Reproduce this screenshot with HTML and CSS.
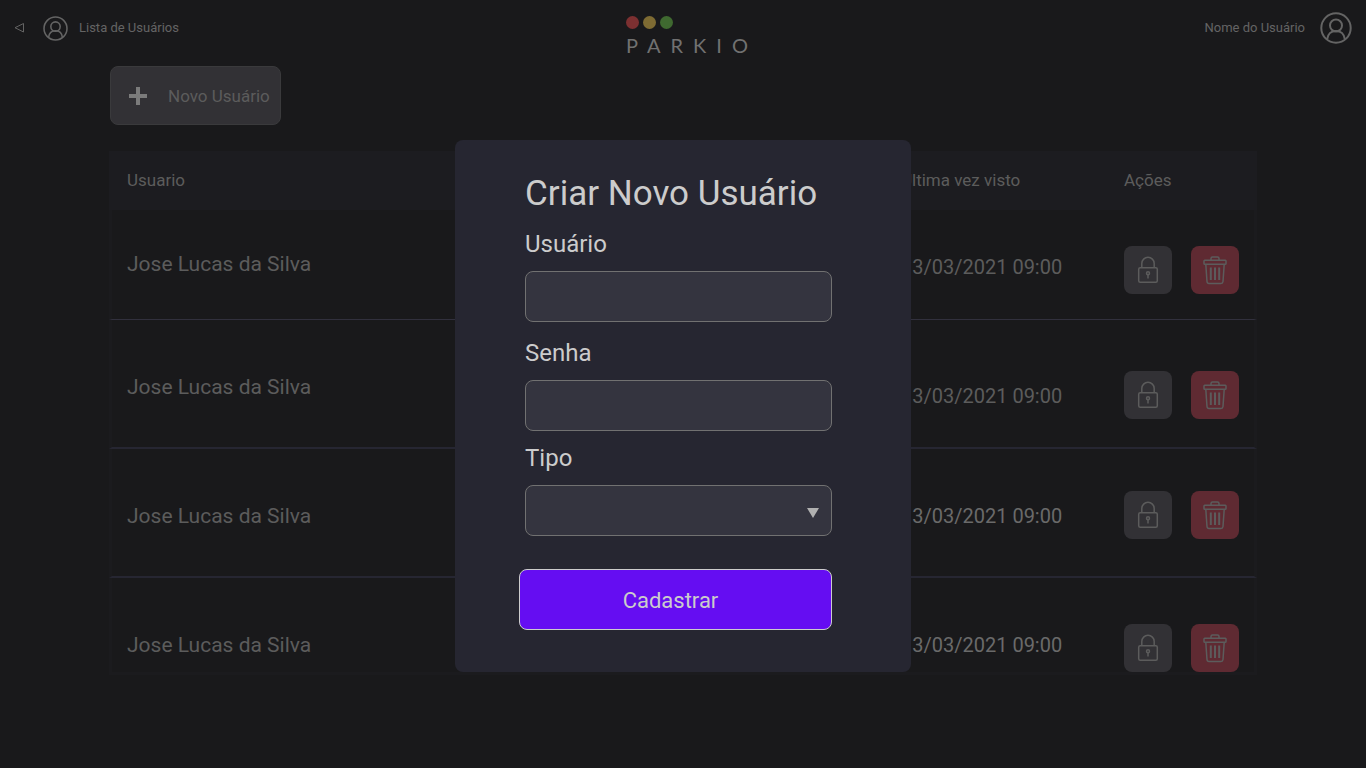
FILE: index.html
```html
<!DOCTYPE html>
<html lang="pt-BR">
<head>
<meta charset="utf-8">
<title>Parkio - Lista de Usuários</title>
<link rel="stylesheet" href="styles.css">
</head>
<body>
<svg class="sprite" aria-hidden="true">
  <symbol id="person" viewBox="0 0 32 32">
    <g fill="none" stroke="currentColor" stroke-width="2">
      <circle cx="16" cy="16" r="14.7"/>
      <circle cx="16" cy="13.5" r="6"/>
      <path d="M7.2 27.2c.6-5.200 4.200-8.300 8.800-8.300s8.200 3.100 8.800 8.300"/>
    </g>
  </symbol>
  <symbol id="lock" viewBox="0 0 24 30">
    <g fill="none" stroke="currentColor" stroke-width="1.500">
      <rect x="2.700" y="12.700" width="18.600" height="14.600" rx="1.500"/>
      <path d="M5.800 12.700V8.500a6.200 6.200 0 0 1 12.400 0v4.200"/>
      <circle cx="12" cy="18.300" r="1.500"/>
      <path d="M12 19.500v4"/>
    </g>
  </symbol>
  <symbol id="trash" viewBox="0 0 26 30">
    <g fill="none" stroke="currentColor" stroke-width="1.500" stroke-linejoin="round">
      <path d="M9 5V3.500C9 2.500 9.500 2 10.500 2h5c1 0 1.500.5 1.500 1.500V5"/>
      <rect x="2" y="5.200" width="22" height="4" rx=".8"/>
      <path d="M3.800 9.200l1.200 17.300c.1 1.200.8 1.900 2 1.900h12c1.200 0 1.900-.7 2-1.900l1.200-17.300"/>
      <path d="M8.800 12.500v12.500M13 12.500v12.500M17.200 12.500v12.500" stroke-width="2"/>
    </g>
  </symbol>
</svg>

<header class="topbar">
  <nav class="topbar-side">
    <a class="back" href="#" aria-label="Voltar">
      <svg width="10" height="10" viewBox="0 0 10 10"><path d="M9.500 .5v8.500L1 4.700z" fill="none" stroke="currentColor"/></svg>
    </a>
    <svg class="avatar-small"><use href="#person"/></svg>
    <span>Lista de Usuários</span>
  </nav>
  <div class="logo">
    <div class="dots"><i class="dot red"></i><i class="dot yellow"></i><i class="dot green"></i></div>
    <span class="wordmark">PARKIO</span>
  </div>
  <div class="topbar-side account">
    <span>Nome do Usuário</span>
    <svg class="avatar"><use href="#person"/></svg>
  </div>
</header>

<main class="content">
  <button class="new-user" type="button">
    <svg width="18" height="18" viewBox="0 0 18 18"><path d="M7 0h4v7h7v4h-7v7H7v-7H0V7h7z" fill="currentColor"/></svg>
    <span>Novo Usuário</span>
  </button>

  <table class="users">
    <colgroup><col class="col-user"><col class="col-seen"><col class="col-actions"></colgroup>
    <thead>
      <tr><th>Usuario</th><th>Última vez visto</th><th>Ações</th></tr>
    </thead>
    <tbody>
      <tr class="row-first">
        <td class="name">Jose Lucas da Silva</td>
        <td class="seen">13/03/2021 09:00</td>
        <td class="actions"><div class="action-group">
          <button class="action" type="button" aria-label="Bloquear"><svg class="icon-lock"><use href="#lock"/></svg></button>
          <button class="action danger" type="button" aria-label="Excluir"><svg class="icon-trash"><use href="#trash"/></svg></button>
        </div></td>
      </tr>
      <tr class="row-low">
        <td class="name">Jose Lucas da Silva</td>
        <td class="seen">13/03/2021 09:00</td>
        <td class="actions"><div class="action-group">
          <button class="action" type="button" aria-label="Bloquear"><svg class="icon-lock"><use href="#lock"/></svg></button>
          <button class="action danger" type="button" aria-label="Excluir"><svg class="icon-trash"><use href="#trash"/></svg></button>
        </div></td>
      </tr>
      <tr>
        <td class="name">Jose Lucas da Silva</td>
        <td class="seen recent">13/03/2021 09:00</td>
        <td class="actions"><div class="action-group">
          <button class="action" type="button" aria-label="Bloquear"><svg class="icon-lock"><use href="#lock"/></svg></button>
          <button class="action danger" type="button" aria-label="Excluir"><svg class="icon-trash"><use href="#trash"/></svg></button>
        </div></td>
      </tr>
      <tr class="row-last">
        <td class="name">Jose Lucas da Silva</td>
        <td class="seen recent">13/03/2021 09:00</td>
        <td class="actions"><div class="action-group">
          <button class="action" type="button" aria-label="Bloquear"><svg class="icon-lock"><use href="#lock"/></svg></button>
          <button class="action danger" type="button" aria-label="Excluir"><svg class="icon-trash"><use href="#trash"/></svg></button>
        </div></td>
      </tr>
    </tbody>
  </table>
</main>

<div class="overlay">
  <form class="modal" role="dialog" aria-labelledby="modal-title">
    <h1 id="modal-title">Criar Novo Usuário</h1>
    <div class="field">
      <label for="user">Usuário</label>
      <input id="user" type="text">
    </div>
    <div class="field field-tight">
      <label for="password">Senha</label>
      <input id="password" type="password">
    </div>
    <div class="field field-last">
      <label for="type">Tipo</label>
      <div class="select-wrap">
        <select id="type"><option value=""></option></select>
        <svg class="caret" width="12" height="10" viewBox="0 0 12 10"><path d="M0 0h12L6 10z" fill="currentColor"/></svg>
      </div>
    </div>
    <button class="submit" type="submit">Cadastrar</button>
  </form>
</div>
</body>
</html>
```
FILE: styles.css
```css
* {
  box-sizing: border-box;
}

body {
  margin: 0;
  min-height: 100vh;
  background: #19191b;
  color: #5c5c5c;
  font-family: Roboto, "Liberation Sans", sans-serif;
}

button,
input,
select {
  font: inherit;
  color: inherit;
}

.sprite {
  display: none;
}

/* Top bar */
.topbar {
  display: grid;
  grid-template-columns: 1fr auto 1fr;
  align-items: center;
  height: 56px;
  padding: 0 14px;
  color: #646464;
  font-size: 13px;
  line-height: 16px;
}

.topbar-side {
  display: flex;
  align-items: center;
}

.account {
  justify-content: flex-end;
  gap: 15px;
}

.back {
  display: flex;
  margin-right: 19px;
  color: inherit;
}

.avatar-small {
  width: 25px;
  height: 25px;
  margin-right: 11px;
}

.avatar {
  width: 32px;
  height: 32px;
}

.logo {
  padding: 16px 0 0 18px;
  color: #717171;
}

.dots {
  display: flex;
  gap: 4px;
}

.dot {
  width: 13px;
  height: 13px;
  border-radius: 50%;
}

.red {
  background: #7c3031;
}

.yellow {
  background: #7e6b33;
}

.green {
  background: #3f6930;
}

.wordmark {
  display: block;
  margin-top: 5px;
  font-family: Lato, sans-serif;
  font-size: 20px;
  line-height: 22px;
  letter-spacing: 10px;
}

/* Page content */
.content {
  padding: 10px 109px 0;
}

.new-user {
  display: flex;
  align-items: center;
  gap: 21px;
  height: 59px;
  margin: 0 0 26px 1px;
  padding: 0 10px 0 18px;
  border: 1px solid #3a3a3c;
  border-radius: 8px;
  background: #323135;
  font-size: 17px;
}

.new-user svg {
  color: #7b7b7b;
}

.users {
  width: 100%;
  table-layout: fixed;
  border-collapse: separate;
  border-spacing: 0;
  text-align: left;
}

.col-seen {
  width: 223px;
}

.col-actions {
  width: 133px;
}

.users th {
  height: 59px;
  padding: 0 0 2px;
  background: #1c1c20;
  font-size: 17px;
  font-weight: 400;
}

.users th:first-child {
  padding-left: 18px;
}

.users td {
  height: 129px;
  padding: 55px 0 0;
  border-bottom: 2px solid #262632;
  font-size: 20px;
  line-height: 24px;
  vertical-align: top;
}

.users td:first-child {
  padding-left: 15px;
  border-left: 3px solid #1b1b1e;
}

.users td:last-child {
  border-right: 3px solid #1b1b1e;
}

.users td.name {
  font-size: 21px;
}

.users td.recent {
  color: #6a6a6a;
}

.users td.actions {
  padding-top: 42px;
}

.users .row-first td {
  height: 110px;
  padding-top: 42px;
  border-bottom: 1px solid #31303d;
}

.users .row-first td.seen {
  padding-top: 45px;
}

.users .row-first td.actions {
  padding-top: 36px;
}

.users .row-low td.seen {
  padding-top: 64px;
}

.users .row-low td.actions {
  padding-top: 51px;
}

.users .row-last td {
  height: 97px;
  border-bottom: 3px solid #1b1b1e;
}

.users .row-last td.actions {
  padding-top: 46px;
}

.action-group {
  display: flex;
  gap: 19px;
}

.action {
  display: flex;
  align-items: center;
  justify-content: center;
  width: 48px;
  height: 48px;
  padding: 0;
  border: 0;
  border-radius: 8px;
  background: #323135;
}

.danger {
  background: #5f2a32;
}

.icon-lock {
  width: 24px;
  height: 30px;
}

.icon-trash {
  width: 26px;
  height: 30px;
}

/* New user dialog */
.overlay {
  position: fixed;
  inset: 0;
  display: flex;
  align-items: center;
  justify-content: center;
  padding-top: 44px;
}

.modal {
  width: 456px;
  padding: 33px 79px 42px 70px;
  border-radius: 8px;
  background: #262631;
  color: #cccccc;
}

.modal h1 {
  margin: 0 0 13px;
  font-size: 35px;
  font-weight: 400;
  line-height: 42px;
}

.field {
  display: flex;
  flex-direction: column;
  gap: 11px;
  margin-bottom: 15px;
}

.field-tight {
  margin-bottom: 11px;
}

.field-last {
  margin-bottom: 33px;
}

.field label {
  font-size: 24px;
  line-height: 32px;
}

.field input,
.field select {
  display: block;
  width: 100%;
  height: 51px;
  padding: 0 12px;
  border: 1px solid #717171;
  border-radius: 8px;
  background: #34343f;
  font-size: 20px;
  appearance: none;
}

.select-wrap {
  position: relative;
}

.caret {
  position: absolute;
  top: 23px;
  right: 13px;
  color: #b0b0b0;
  pointer-events: none;
}

.submit {
  display: block;
  width: calc(100% + 6px);
  height: 61px;
  margin-left: -6px;
  padding: 2px 16px 0 6px;
  border: 1px solid #cccccc;
  border-radius: 8px;
  background: #650df2;
  font-size: 22px;
}
```
